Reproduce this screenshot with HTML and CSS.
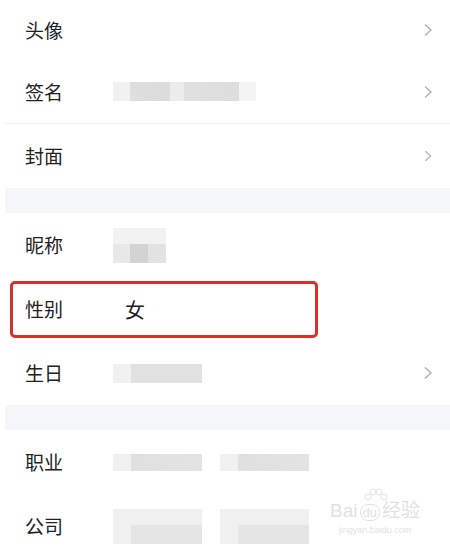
FILE: index.html
```html
<!DOCTYPE html>
<html lang="zh-CN">
<head>
    <meta charset="UTF-8">
    <meta name="viewport" content="width=device-width, initial-scale=1.0">
    <title>编辑资料</title>
    <link rel="stylesheet" href="styles.css">
</head>
<body>
    <div class="profile">
        <div class="row row-first">
            <span class="label">头像</span>
            <span class="value"></span>
            <svg class="arrow" viewBox="0 0 10 14"><path d="M2 1.5 L8 7 L2 12.5"/></svg>
        </div>
        <div class="row row-line">
            <span class="label">签名</span>
            <span class="value"><i class="blur blur-sign"></i></span>
            <svg class="arrow" viewBox="0 0 10 14"><path d="M2 1.5 L8 7 L2 12.5"/></svg>
        </div>
        <div class="row">
            <span class="label">封面</span>
            <span class="value"></span>
            <svg class="arrow arrow-small" viewBox="0 0 10 14"><path d="M2 1.5 L8 7 L2 12.5"/></svg>
        </div>

        <div class="gap"></div>

        <div class="row">
            <span class="label">昵称</span>
            <span class="value"><i class="blur blur-nick"></i></span>
        </div>
        <div class="row row-mark">
            <span class="label">性别</span>
            <span class="value value-text">女</span>
            <div class="mark"></div>
        </div>
        <div class="row">
            <span class="label">生日</span>
            <span class="value"><i class="blur blur-birth"></i></span>
            <svg class="arrow" viewBox="0 0 10 14"><path d="M2 1.5 L8 7 L2 12.5"/></svg>
        </div>

        <div class="gap"></div>

        <div class="row">
            <span class="label">职业</span>
            <span class="value"><i class="blur blur-word"></i><i class="blur blur-word"></i></span>
        </div>
        <div class="row">
            <span class="label">公司</span>
            <span class="value"><i class="blur blur-word blur-tall"></i><i class="blur blur-word blur-tall"></i></span>
            <div class="watermark">
                <svg class="wm-paw" viewBox="0 0 30 22">
                    <circle cx="8" cy="9" r="3"/>
                    <circle cx="13" cy="4" r="3"/>
                    <circle cx="19" cy="4" r="3"/>
                    <circle cx="24" cy="9" r="3"/>
                </svg>
                <div class="wm-logo">Bai<b>du</b>经验</div>
                <div class="wm-url">jingyan.baidu.com</div>
            </div>
        </div>
    </div>
</body>
</html>
```

FILE: styles.css
```css
body {
    margin: 0;
    background: #fff;
    font-family: "Noto Sans CJK SC", "Noto Sans", sans-serif;
    color: #222;
}
.profile {
    width: 450px;
    height: 560px;
    overflow: hidden;
}
.row {
    position: relative;
    display: flex;
    align-items: center;
    height: 64px;
    padding: 0 17px 0 25px;
}
.row-first {
    height: 60px;
}
.row-line {
    border-bottom: 1px solid #eeeeee;
    margin-left: 5px;
    padding-left: 20px;
    height: 63px;
}
.label {
    width: 88px;
    font-size: 19px;
    line-height: 24px;
}
.value {
    flex: 1;
    display: flex;
    gap: 18px;
    font-size: 20px;
}
.value-text {
    padding-left: 12px;
}
.arrow {
    width: 10px;
    height: 14px;
    fill: none;
    stroke: #b0b0b0;
    stroke-width: 1.4;
}
.arrow-small {
    height: 12px;
}
.gap {
    height: 25px;
    background: #f5f6f8;
    margin-left: 5px;
}
.blur {
    display: block;
    height: 19px;
    background: linear-gradient(90deg, #f1f1f1 0, #f1f1f1 12%, #dedede 12%, #dcdcdc 40%, #ececec 40%, #ececec 50%, #e0e0e0 50%, #dddddd 88%, #f4f4f4 88%);
}
.blur-sign {
    width: 143px;
}
.blur-nick {
    width: 53px;
    height: 35px;
    background: linear-gradient(180deg, #f2f2f2 0, #f2f2f2 45%, transparent 45%),
                linear-gradient(90deg, #e8e8e8 0, #e8e8e8 33%, #d3d3d3 33%, #d3d3d3 66%, #e2e2e2 66%);
}
.blur-birth {
    width: 89px;
    background: linear-gradient(90deg, #f1f1f1 0, #f1f1f1 20%, #e1e1e1 20%);
}
.blur-word {
    width: 89px;
    height: 17px;
    background: linear-gradient(90deg, #f0f0f0 0, #f0f0f0 20%, #e0e0e0 20%, #e3e3e3 100%);
}
.blur-tall {
    height: 35px;
    background: linear-gradient(180deg, #f0f0f0 0, #f0f0f0 45%, transparent 45%),
                linear-gradient(90deg, #f0f0f0 0, #f0f0f0 20%, #e5e5e5 20%);
}
.mark {
    position: absolute;
    left: 10px;
    top: 4px;
    width: 302px;
    height: 51px;
    border: 3px solid #d8302a;
    border-radius: 5px;
}
.watermark {
    position: absolute;
    right: 30px;
    top: 6px;
    text-align: center;
    color: #e2e2e2;
}
.wm-paw {
    position: absolute;
    left: 30px;
    top: -12px;
    width: 30px;
    height: 22px;
    fill: none;
    stroke: #e2e2e2;
    stroke-width: 1;
}
.wm-logo {
    font-family: "Liberation Sans", sans-serif;
    font-size: 19px;
    line-height: 22px;
}
.wm-logo b {
    font-weight: normal;
    font-size: 13px;
    border: 1px solid #e2e2e2;
    border-radius: 8px;
    padding: 0 2px;
    margin: 0 2px;
}
.wm-url {
    font-family: "Liberation Sans", sans-serif;
    font-size: 9px;
    line-height: 12px;
}
```
